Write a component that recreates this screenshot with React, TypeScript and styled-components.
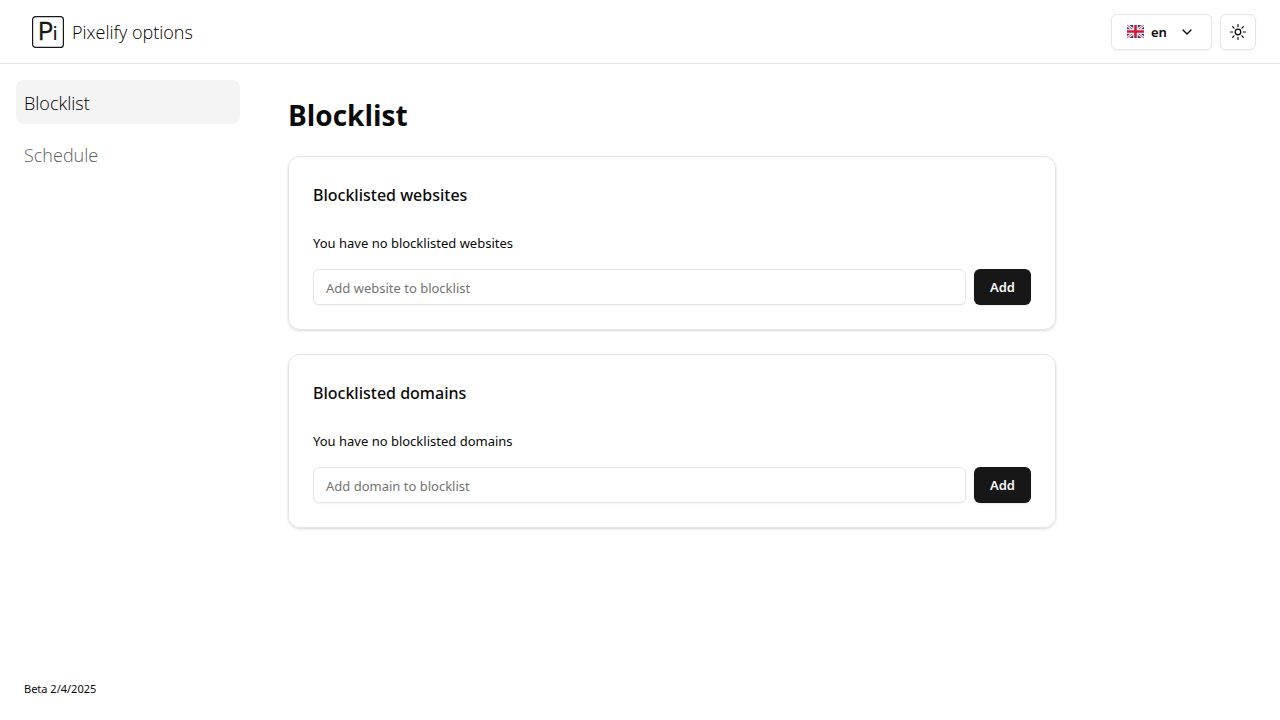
import React, { useId } from "react";
import styled, { createGlobalStyle, css } from "styled-components";
import { ChevronDown } from "lucide-react";

const GlobalStyle = createGlobalStyle`
  *, *::before, *::after { box-sizing: border-box; }
  body {
    margin: 0;
    background: #ffffff;
    color: #0a0a0a;
    font-family: "Segoe UI", "Noto Sans", sans-serif;
    font-size: 13px;
    line-height: 20px;
  }
  h1, h2, p { margin: 0; }
  button, input, select { font: inherit; color: inherit; }
`;

const lightText = css`
  font-family: "Segoe UI", "Open Sans", sans-serif;
  font-size: 18px;
  font-weight: 300;
  line-height: 28px;
  text-decoration: none;
`;

const Page = styled.div`
  display: flex;
  flex-direction: column;
  min-height: 100vh;
`;

const Header = styled.header`
  display: flex;
  align-items: center;
  justify-content: space-between;
  height: 64px;
  padding: 0 24px 0 32px;
  border-bottom: 1px solid #e5e5e5;
`;

const Brand = styled.a`
  ${lightText}
  display: flex;
  align-items: center;
  gap: 8px;
  color: #000000;
`;

const HeaderActions = styled.div`
  display: flex;
  gap: 8px;
`;

const outlined = css`
  height: 36px;
  border: 1px solid #e5e5e5;
  border-radius: 6px;
  background: #ffffff;
  box-shadow: 0 1px 2px rgba(0, 0, 0, 0.05);
`;

const LanguagePicker = styled.label`
  ${outlined}
  display: flex;
  align-items: center;
  padding: 0 16px 0 15px;
  font-weight: 600;
`;

const LanguageSelect = styled.select`
  appearance: none;
  width: 28px;
  margin: 0 0 0 7px;
  padding: 0;
  border: 0;
  background: transparent;
`;

const IconButton = styled.button`
  ${outlined}
  display: flex;
  align-items: center;
  justify-content: center;
  width: 36px;
  padding: 0;
`;

const Body = styled.div`
  display: flex;
  flex: 1;
`;

const Sidebar = styled.aside`
  display: flex;
  flex-direction: column;
  justify-content: space-between;
  width: 256px;
  flex-shrink: 0;
  padding: 16px;
`;

const Nav = styled.nav`
  display: flex;
  flex-direction: column;
  gap: 8px;
`;

const NavLink = styled.a<{ $active?: boolean }>`
  ${lightText}
  padding: 9px 8px 7px;
  border-radius: 8px;
  background: ${(p) => (p.$active ? "#f4f4f4" : "transparent")};
  color: ${(p) => (p.$active ? "#000000" : "#606060")};
`;

const Version = styled.p`
  padding: 0 8px;
  font-size: 11px;
  line-height: 30px;
`;

const Main = styled.main`
  display: flex;
  flex: 1;
  flex-direction: column;
  gap: 24px;
  max-width: 832px;
  padding: 32px;
`;

const Title = styled.h1`
  padding-top: 2px;
  font-family: "Segoe UI", "Open Sans", sans-serif;
  font-size: 28px;
  font-weight: 700;
  line-height: 34px;
`;

const Card = styled.section`
  display: flex;
  flex-direction: column;
  padding: 24px;
  border: 1px solid #e5e5e5;
  border-radius: 12px;
  box-shadow: 0 1px 3px rgba(0, 0, 0, 0.1), 0 1px 2px rgba(0, 0, 0, 0.06);
`;

const CardTitle = styled.h2`
  margin-bottom: 24px;
  font-size: 16px;
  font-weight: 500;
  line-height: 28px;
`;

const AddForm = styled.form`
  display: flex;
  gap: 8px;
  margin-top: 16px;
`;

const TextInput = styled.input`
  ${outlined}
  flex: 1;
  min-width: 0;
  padding: 2px 12px 0;

  &::placeholder {
    color: #737373;
    opacity: 1;
  }
`;

const AddButton = styled.button`
  height: 36px;
  padding: 0 16px;
  border: 0;
  border-radius: 6px;
  background: #171717;
  color: #fafafa;
  font-weight: 600;
  box-shadow: 0 1px 2px rgba(0, 0, 0, 0.1);
`;

const LogoText = styled.text`
  font-family: Inter, sans-serif;
  fill: #171717;
`;

function Logo() {
  return (
    <svg width="32" height="32" viewBox="0 0 32 32" aria-hidden="true">
      <rect x="0.6" y="0.6" width="30.8" height="30.8" rx="3" fill="#fff" stroke="#171717" strokeWidth="1.2" />
      <LogoText x="6" y="24" fontSize="24" fontWeight="400" stroke="#171717" strokeWidth="0.3">P</LogoText>
      <LogoText x="21" y="24" fontSize="17" fontWeight="500">i</LogoText>
    </svg>
  );
}

function UnionFlag() {
  return (
    <svg width="17" height="13" viewBox="0 0 17 13" aria-hidden="true">
      <rect width="17" height="13" fill="#2b3f7e" />
      <path d="M0 0L17 13M17 0L0 13" stroke="#fff" strokeWidth="2.8" />
      <path d="M0 0L17 13M17 0L0 13" stroke="#d8405c" strokeWidth="1" />
      <path d="M8.5 0V13M0 6.5H17" stroke="#fff" strokeWidth="4.4" />
      <path d="M8.5 0V13M0 6.5H17" stroke="#cf1b3b" strokeWidth="2.6" />
    </svg>
  );
}

function SunIcon() {
  return (
    <svg width="16" height="16" viewBox="0 0 15 15" fill="none" stroke="currentColor" aria-hidden="true">
      <circle cx="7.5" cy="7.5" r="2.6" strokeWidth="1.2" />
      <path
        d="M7.5 .5V2.5M7.5 12.5V14.5M.5 7.5H2.5M12.5 7.5H14.5M2.55 2.55L3.8 3.8M11.2 11.2L12.45 12.45M2.55 12.45L3.8 11.2M11.2 3.8L12.45 2.55"
        strokeWidth="1.1"
        strokeLinecap="round"
      />
    </svg>
  );
}

function BlocklistCard({ kind }: { kind: string }) {
  const headingId = useId();
  return (
    <Card aria-labelledby={headingId}>
      <CardTitle id={headingId}>Blocklisted {kind}s</CardTitle>
      <p>You have no blocklisted {kind}s</p>
      <AddForm onSubmit={(e) => e.preventDefault()}>
        <TextInput
          type="text"
          aria-label={`Add ${kind} to blocklist`}
          placeholder={`Add ${kind} to blocklist`}
        />
        <AddButton type="submit">Add</AddButton>
      </AddForm>
    </Card>
  );
}

export default function App() {
  return (
    <Page>
      <GlobalStyle />
      <Header>
        <Brand href="#">
          <Logo />
          Pixelify options
        </Brand>
        <HeaderActions>
          <LanguagePicker>
            <UnionFlag />
            <LanguageSelect aria-label="Language" defaultValue="en">
              <option value="en">en</option>
            </LanguageSelect>
            <ChevronDown size={16} aria-hidden="true" />
          </LanguagePicker>
          <IconButton type="button" aria-label="Toggle theme">
            <SunIcon />
          </IconButton>
        </HeaderActions>
      </Header>
      <Body>
        <Sidebar>
          <Nav>
            <NavLink href="#blocklist" $active aria-current="page">Blocklist</NavLink>
            <NavLink href="#schedule">Schedule</NavLink>
          </Nav>
          <Version>Beta 2/4/2025</Version>
        </Sidebar>
        <Main>
          <Title>Blocklist</Title>
          <BlocklistCard kind="website" />
          <BlocklistCard kind="domain" />
        </Main>
      </Body>
    </Page>
  );
}
